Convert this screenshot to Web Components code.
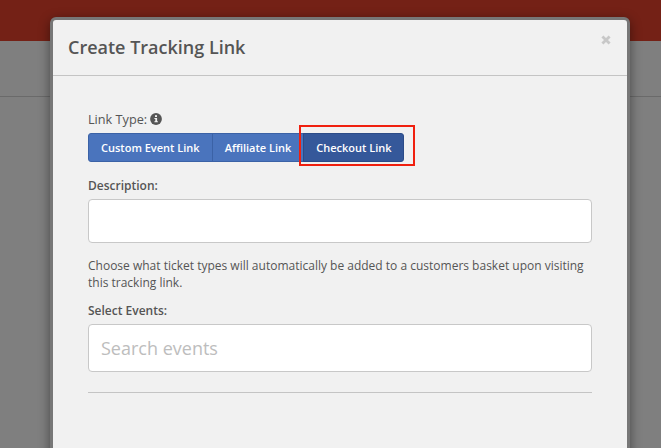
<!DOCTYPE html>
<html>
<head>
<meta charset="utf-8">
<style>
  html, body { margin: 0; height: 100%; overflow: hidden; background: #7f7f7f; }
  body { font-family: "Open Sans", "Noto Sans", sans-serif; color: #555; }
</style>
</head>
<body>
<page-backdrop></page-backdrop>
<tracking-modal heading="Create Tracking Link">
  <form-label style="font-size:12.7px">Link Type: <info-icon></info-icon></form-label>
  <link-type-group>
    <type-button>Custom Event Link</type-button>
    <type-button>Affiliate Link</type-button>
    <type-button active>Checkout Link</type-button>
  </link-type-group>
  <form-label bold style="margin-top:15px">Description:</form-label>
  <text-box style="margin-top:4px;height:44px"></text-box>
  <help-text style="margin-top:14px">Choose what ticket types will automatically be added to a customers basket upon visiting this tracking link.</help-text>
  <form-label bold style="margin-top:11px">Select Events:</form-label>
  <text-box style="margin-top:4px;height:48px" placeholder="Search events"></text-box>
  <modal-rule></modal-rule>
</tracking-modal>

<script>
class PageBackdrop extends HTMLElement {
    constructor() {
        super();
        this.attachShadow({ mode: 'open' });
        this.shadowRoot.innerHTML = `
            <style>
              :host { display: block; }
              .top { height: 41px; background: #742116; }
              .sub { height: 55px; background: #7f7f7f; border-bottom: 1px solid #6a6a6a; }
            </style>
            <div class="top"></div>
            <div class="sub"></div>
        `;
    }
}

class TrackingModal extends HTMLElement {
    constructor() {
        super();
        this.attachShadow({ mode: 'open' });
    }

    connectedCallback() {
        this.shadowRoot.innerHTML = `
            <style>
              :host {
                display: block;
                position: absolute;
                left: 50px;
                top: 17px;
                width: 574px;
                height: 520px;
                background: #f1f1f1;
                border: 3px solid #777;
                border-radius: 6px;
                box-shadow: 0 3px 12px rgba(0,0,0,.45);
              }
              header {
                display: flex;
                justify-content: space-between;
                align-items: flex-start;
                height: 56px;
                box-sizing: border-box;
                padding: 15px 16px 0 15px;
                border-bottom: 1px solid #c4c4c4;
              }
              h4 { margin: 0; font-size: 18px; line-height: 24px; font-weight: 600; color: #555; }
              .close { display: block; }
              .body { display: flex; flex-direction: column; padding: 34px 35px 0; }
            </style>
            <header>
                <h4>${this.getAttribute('heading')}</h4>
                <svg class="close" width="10" height="10" viewBox="0 0 10 10">
                    <path d="M1.4 1.4l7.2 7.2M8.6 1.4L1.4 8.6" stroke="#c8c8c8" stroke-width="2.8" fill="none"/>
                </svg>
            </header>
            <div class="body"><slot></slot></div>
        `;
    }
}

class FormLabel extends HTMLElement {
    constructor() {
        super();
        this.attachShadow({ mode: 'open' });
        this.shadowRoot.innerHTML = `
            <style>
              :host { display: flex; align-items: center; gap: 3px; height: 18px; font-size: 12px; line-height: 18px; color: #555; }
              :host([bold]) { font-weight: 600; }
            </style>
            <slot></slot>
        `;
    }
}

class InfoIcon extends HTMLElement {
    constructor() {
        super();
        this.attachShadow({ mode: 'open' });
        this.shadowRoot.innerHTML = `
            <style>
              :host { display: inline-flex; }
            </style>
            <svg width="12" height="12" viewBox="0 0 12 12">
                <circle cx="6" cy="6" r="5.9" fill="#555"/>
                <rect x="5" y="2.2" width="2" height="1.8" fill="#f1f1f1"/>
                <path d="M4.4 5h2.7v3.2h.8v1H4.4v-1h.9V6h-.9z" fill="#f1f1f1"/>
            </svg>
        `;
    }
}

class LinkTypeGroup extends HTMLElement {
    constructor() {
        super();
        this.attachShadow({ mode: 'open' });
        this.shadowRoot.innerHTML = `
            <style>
              :host { display: flex; margin-top: 5px; position: relative; width: 316px; }
              .mark {
                position: absolute;
                left: 211px;
                top: -8px;
                width: 112px;
                height: 37px;
                border: 2px solid #f0200f;
                pointer-events: none;
              }
            </style>
            <slot></slot>
            <div class="mark"></div>
        `;
    }
}

class TypeButton extends HTMLElement {
    constructor() {
        super();
        this.attachShadow({ mode: 'open' });
        this.shadowRoot.innerHTML = `
            <style>
              :host {
                display: block;
                box-sizing: border-box;
                height: 29px;
                padding: 0 12px;
                font-size: 11px;
                line-height: 28px;
                font-weight: 600;
                color: #fff;
                white-space: nowrap;
                background: #4a74bd;
                border: 1px solid #3b62a6;
                margin-left: -1px;
              }
              :host(:first-of-type) { border-radius: 3px 0 0 3px; margin-left: 0; }
              :host(:last-of-type) { border-radius: 0 3px 3px 0; }
              :host([active]) { background: #35589a; border-color: #2c4c88; padding-right: 11px; }
            </style>
            <slot></slot>
        `;
    }
}

class TextBox extends HTMLElement {
    constructor() {
        super();
        this.attachShadow({ mode: 'open' });
    }

    connectedCallback() {
        const placeholder = this.getAttribute('placeholder') || '';
        this.shadowRoot.innerHTML = `
            <style>
              :host { display: block; box-sizing: border-box; }
              input {
                display: block;
                box-sizing: border-box;
                width: 100%;
                height: 100%;
                padding: 0 12px;
                background: #fff;
                border: 1px solid #c8c8c8;
                border-radius: 4px;
                outline: none;
                font-family: inherit;
                font-size: 18px;
                color: #555;
              }
              input::placeholder { color: #bdbdbd; opacity: 1; }
            </style>
            <input type="text" placeholder="${placeholder}">
        `;
    }
}

class HelpText extends HTMLElement {
    constructor() {
        super();
        this.attachShadow({ mode: 'open' });
        this.shadowRoot.innerHTML = `
            <style>
              :host { display: block; font-size: 12px; line-height: 17px; color: #555; }
            </style>
            <slot></slot>
        `;
    }
}

class ModalRule extends HTMLElement {
    constructor() {
        super();
        this.attachShadow({ mode: 'open' });
        this.shadowRoot.innerHTML = `
            <style>
              :host { display: block; height: 1px; margin-top: 20px; background: #c4c4c4; }
            </style>
        `;
    }
}

customElements.define('page-backdrop', PageBackdrop);
customElements.define('tracking-modal', TrackingModal);
customElements.define('form-label', FormLabel);
customElements.define('info-icon', InfoIcon);
customElements.define('link-type-group', LinkTypeGroup);
customElements.define('type-button', TypeButton);
customElements.define('text-box', TextBox);
customElements.define('help-text', HelpText);
customElements.define('modal-rule', ModalRule);
</script>
</body>
</html>
